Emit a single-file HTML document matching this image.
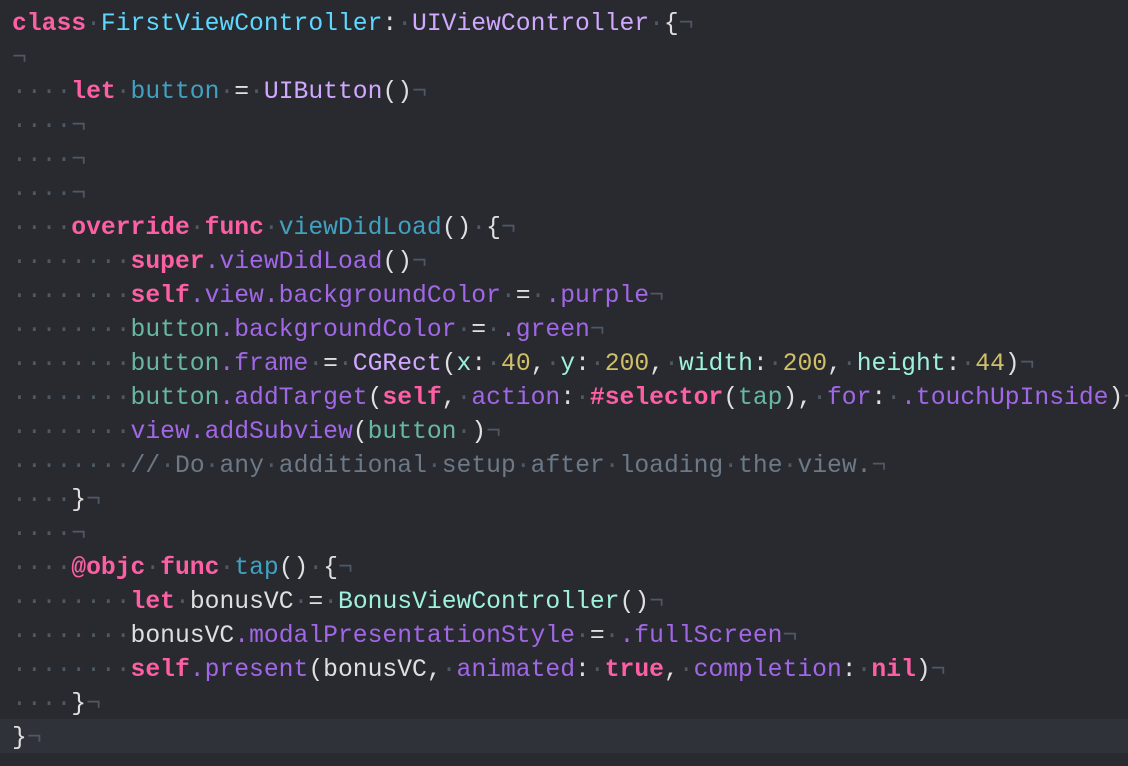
<!DOCTYPE html>
<html><head><meta charset="utf-8"><style>
html,body{margin:0;padding:0;background:#292a30;width:1128px;height:766px;overflow:hidden}
pre{margin:0;position:absolute;top:7px;left:12px;font-family:"Liberation Mono",monospace;font-size:24.7px;line-height:34px;color:#dfdfe0;white-space:pre}
.hl{position:absolute;left:0;top:719px;width:1128px;height:34px;background:#2f3239}
i{font-style:normal;color:#4f5966}
.k{color:#fc5fa3;font-weight:bold}
.t{color:#5dd8ff}
.c{color:#d0a8ff}
.d{color:#41a1c0}
.p{color:#67b7a4}
.f{color:#a167e6}
.m{color:#9ef1dd}
.n{color:#d0bf69}
.cm{color:#6c7986}
</style></head><body>
<div class="hl"></div>
<pre><span class="k">class</span><i>·</i><span class="t">FirstViewController</span>:<i>·</i><span class="c">UIViewController</span><i>·</i>{<i>¬</i>
<i>¬</i>
<i>····</i><span class="k">let</span><i>·</i><span class="d">button</span><i>·</i>=<i>·</i><span class="c">UIButton</span>()<i>¬</i>
<i>····¬</i>
<i>····¬</i>
<i>····¬</i>
<i>····</i><span class="k">override</span><i>·</i><span class="k">func</span><i>·</i><span class="d">viewDidLoad</span>()<i>·</i>{<i>¬</i>
<i>········</i><span class="k">super</span><span class="f">.viewDidLoad</span>()<i>¬</i>
<i>········</i><span class="k">self</span><span class="f">.view.backgroundColor</span><i>·</i>=<i>·</i><span class="f">.purple</span><i>¬</i>
<i>········</i><span class="p">button</span><span class="f">.backgroundColor</span><i>·</i>=<i>·</i><span class="f">.green</span><i>¬</i>
<i>········</i><span class="p">button</span><span class="f">.frame</span><i>·</i>=<i>·</i><span class="c">CGRect</span>(<span class="m">x</span>:<i>·</i><span class="n">40</span>,<i>·</i><span class="m">y</span>:<i>·</i><span class="n">200</span>,<i>·</i><span class="m">width</span>:<i>·</i><span class="n">200</span>,<i>·</i><span class="m">height</span>:<i>·</i><span class="n">44</span>)<i>¬</i>
<i>········</i><span class="p">button</span><span class="f">.addTarget</span>(<span class="k">self</span>,<i>·</i><span class="f">action</span>:<i>·</i><span class="k">#selector</span>(<span class="p">tap</span>),<i>·</i><span class="f">for</span>:<i>·</i><span class="f">.touchUpInside</span>)<i>¬</i>
<i>········</i><span class="f">view.addSubview</span>(<span class="p">button</span><i>·</i>)<i>¬</i>
<i>········</i><span class="cm">//<i>·</i>Do<i>·</i>any<i>·</i>additional<i>·</i>setup<i>·</i>after<i>·</i>loading<i>·</i>the<i>·</i>view.</span><i>¬</i>
<i>····</i>}<i>¬</i>
<i>····¬</i>
<i>····</i><span class="k">@objc</span><i>·</i><span class="k">func</span><i>·</i><span class="d">tap</span>()<i>·</i>{<i>¬</i>
<i>········</i><span class="k">let</span><i>·</i>bonusVC<i>·</i>=<i>·</i><span class="m">BonusViewController</span>()<i>¬</i>
<i>········</i>bonusVC<span class="f">.modalPresentationStyle</span><i>·</i>=<i>·</i><span class="f">.fullScreen</span><i>¬</i>
<i>········</i><span class="k">self</span><span class="f">.present</span>(bonusVC,<i>·</i><span class="f">animated</span>:<i>·</i><span class="k">true</span>,<i>·</i><span class="f">completion</span>:<i>·</i><span class="k">nil</span>)<i>¬</i>
<i>····</i>}<i>¬</i>
}<i>¬</i></pre>
</body></html>
